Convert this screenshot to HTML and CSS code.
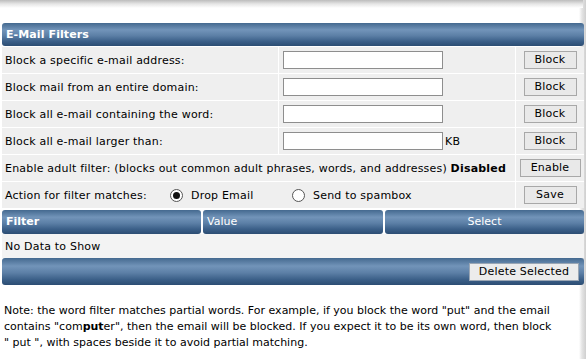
FILE: index.html
```html
<!DOCTYPE html>
<html>
<head>
<meta charset="utf-8">
<link rel="stylesheet" href="styles.css">
</head>
<body>
<div class="top-shadow"></div>
<div class="panel">
  <div class="bar panel-head">E-Mail Filters</div>
  <div class="form">
    <div class="cell label">Block a specific e-mail address:</div>
    <div class="cell field"><span class="input"></span></div>
    <div class="cell act"><span class="btn">Block</span></div>

    <div class="cell label">Block mail from an entire domain:</div>
    <div class="cell field"><span class="input"></span></div>
    <div class="cell act"><span class="btn">Block</span></div>

    <div class="cell label">Block all e-mail containing the word:</div>
    <div class="cell field"><span class="input"></span></div>
    <div class="cell act"><span class="btn">Block</span></div>

    <div class="cell label">Block all e-mail larger than:</div>
    <div class="cell field"><span class="input"></span><span class="unit">KB</span></div>
    <div class="cell act"><span class="btn">Block</span></div>

    <div class="cell label wide"><span>Enable adult filter: (blocks out common adult phrases, words, and addresses) <b>Disabled</b></span></div>
    <div class="cell act"><span class="btn btn-enable">Enable</span></div>

    <div class="cell label wide">
      <span class="action-label">Action for filter matches:</span>
      <span class="radio checked"></span><span class="radio-text">Drop Email</span>
      <span class="radio"></span><span class="radio-text">Send to spambox</span>
    </div>
    <div class="cell act"><span class="btn">Save</span></div>
  </div>

  <div class="grid-head">
    <div class="bar col col-filter">Filter</div>
    <div class="bar col col-value">Value</div>
    <div class="bar col col-select">Select</div>
  </div>
  <div class="empty">No Data to Show</div>
  <div class="bar grid-foot"><span class="btn btn-delete">Delete Selected</span></div>
</div>
<p class="note">Note: the word filter matches partial words. For example, if you block the word "put" and the email contains "com<b>put</b>er", then the email will be blocked. If you expect it to be its own word, then block <span class="nowrap">" put "</span>, with spaces beside it to avoid partial matching.</p>
</body>
</html>
```

FILE: styles.css
```css
html, body {
  margin: 0;
  padding: 0;
}
body {
  width: 586px;
  height: 359px;
  overflow: hidden;
  font-family: "DejaVu Sans", Verdana, sans-serif;
  font-size: 11px;
  color: #000;
  background: linear-gradient(to right, #fff 0, #fff 579px, #e4e4e4 582px, #cfcfcf 586px);
}
.top-shadow {
  height: 8px;
  margin-right: 3px;
  background: linear-gradient(#bcbcbc, #e6e6e6 50%, #fff);
}
.panel {
  margin: 15px 2px 0 2px;
}
.bar {
  background: linear-gradient(#44698f 0%, #7294b9 30%, #5c7fa6 55%, #3b5f88 80%, #2c4d73 100%);
  color: #fff;
  border-radius: 3px;
}
.panel-head {
  height: 23px;
  line-height: 23px;
  padding-left: 4px;
  font-weight: bold;
  letter-spacing: 0.1px;
}
.form {
  display: grid;
  grid-template-columns: 276px 236px 1fr;
  grid-auto-rows: 26px;
  gap: 1px 1px;
  margin-top: 1px;
  background: #fff;
  letter-spacing: 0.2px;
}
.cell {
  background: #efefef;
  display: flex;
  align-items: center;
}
.label {
  padding-left: 3px;
}
.wide {
  grid-column: 1 / span 2;
}
.field {
  padding-left: 4px;
}
.input {
  display: inline-block;
  width: 158px;
  height: 16px;
  background: #fff;
  border: 1px solid #8e8e8e;
}
.unit {
  margin-left: 2px;
}
.act {
  justify-content: center;
}
.btn {
  display: inline-block;
  box-sizing: border-box;
  width: 53px;
  height: 18px;
  line-height: 16px;
  text-align: center;
  background: #e9e9e9;
  border: 1px solid #a8a8a8;
  color: #000;
  letter-spacing: 0.2px;
}
.btn-enable {
  width: 61px;
}
.action-label {
  width: 165px;
}
.radio {
  box-sizing: border-box;
  width: 13px;
  height: 13px;
  border: 1px solid #555;
  border-radius: 50%;
  background: #fff;
  position: relative;
  margin-right: 8px;
}
.radio.checked::after {
  content: "";
  position: absolute;
  left: 2px;
  top: 2px;
  width: 7px;
  height: 7px;
  border-radius: 50%;
  background: #111;
}
.radio-text {
  width: 101px;
}
.grid-head {
  display: flex;
  gap: 2px;
  margin-top: 2px;
}
.col {
  height: 24px;
  line-height: 24px;
}
.col-filter {
  width: 195px;
  padding-left: 4px;
  font-weight: bold;
}
.col-value {
  width: 176px;
  padding-left: 4px;
}
.col-select {
  flex: 1;
  text-align: center;
}
.empty {
  height: 24px;
  line-height: 25px;
  padding-left: 3px;
  background: #f3f3f3;
  letter-spacing: 0.2px;
}
.grid-foot {
  height: 27px;
  display: flex;
  align-items: center;
  justify-content: flex-end;
  padding-right: 5px;
}
.btn-delete {
  width: 110px;
  height: 18px;
  background: #ececec;
  border-color: #9aa6b4;
}
.note {
  margin: 18px 0 0 4px;
  line-height: 16px;
  width: 572px;
}
.nowrap {
  white-space: nowrap;
}
```
